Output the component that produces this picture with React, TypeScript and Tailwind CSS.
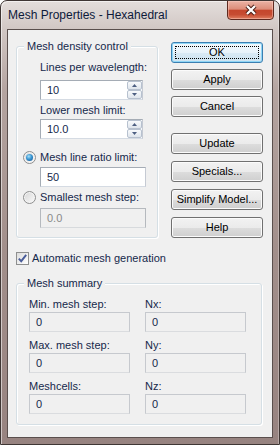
import React from "react";

const LBL = "h-[13px] leading-[13px] text-[11px] text-[#15284b] whitespace-nowrap";

function Btn({ children, def, className = "" }: { children: React.ReactNode; def?: boolean; className?: string }) {
  if (def) {
    return (
      <div
        className={`relative flex h-[21px] w-[92px] items-center justify-center rounded-[3px] border border-[#3c7fb1] bg-[linear-gradient(to_bottom,#f3f9fd_0%,#e7f2fa_50%,#d9eaf5_51%,#cde3f1_100%)] text-[11px] leading-[13px] text-black shadow-[inset_0_0_0_1px_#8fd6f6] ${className}`}
      >
        <div className="absolute inset-[3px] border border-dotted border-black" />
        <span className="relative">{children}</span>
      </div>
    );
  }
  return (
    <div
      className={`flex h-[21px] w-[92px] items-center justify-center rounded-[3px] border border-[#707070] bg-[linear-gradient(to_bottom,#f2f2f2_0%,#ebebeb_50%,#dddddd_51%,#cfcfcf_100%)] text-[11px] leading-[13px] text-black shadow-[inset_0_0_0_1px_#fbfbfb] ${className}`}
    >
      {children}
    </div>
  );
}

function Spin({ value, className = "" }: { value: string; className?: string }) {
  return (
    <div
      className={`flex h-[20px] w-[103px] border border-[#a5acb5] border-b-[#d5dbe3] border-r-[#c5cad3] bg-white ${className}`}
    >
      <div className="flex flex-1 items-center pl-[6px] text-[11px] leading-[13px] text-[#15284b]">{value}</div>
      <div className="flex w-[15px] flex-col gap-0 py-[0px] pr-[0px]">
        <div className="flex flex-1 items-center justify-center rounded-[2px] border border-[#b7c1cf] bg-[linear-gradient(to_bottom,#f8fafc,#dfe5ec)]">
          <svg width="5" height="3" viewBox="0 0 5 3">
            <path d="M0 3 L2.5 0 L5 3 Z" fill="#4d5f82" />
          </svg>
        </div>
        <div className="flex flex-1 items-center justify-center rounded-[2px] border border-[#b7c1cf] bg-[linear-gradient(to_bottom,#f8fafc,#dfe5ec)]">
          <svg width="5" height="3" viewBox="0 0 5 3">
            <path d="M0 0 L2.5 3 L5 0 Z" fill="#4d5f82" />
          </svg>
        </div>
      </div>
    </div>
  );
}

function Field({
  value,
  w,
  variant,
  className = "",
}: {
  value: string;
  w: string;
  variant: "white" | "disabled" | "readonly";
  className?: string;
}) {
  const v =
    variant === "white"
      ? "bg-white border-[#a5acb5] border-b-[#d5dbe3] border-r-[#c5cad3] text-[#15284b]"
      : variant === "disabled"
      ? "bg-[#f0f0f0] border-[#b5b9be] border-b-[#d7dadd] text-[#8a8a8a]"
      : "bg-[#f0f0f0] border-[#c6c9ce] border-b-[#dadcdf] text-[#15284b]";
  return (
    <div className={`flex h-[20px] ${w} items-center border pl-[6px] text-[11px] leading-[13px] ${v} ${className}`}>
      {value}
    </div>
  );
}

function Radio({ checked }: { checked?: boolean }) {
  return (
    <div className="flex h-[13px] w-[13px] shrink-0 items-center justify-center rounded-full border border-[#8e8f8f] bg-[linear-gradient(135deg,#d6d6d6,#fbfbfb)] shadow-[inset_0_0_0_1px_#f4f4f4]">
      {checked && (
        <div className="h-[7px] w-[7px] rounded-full bg-[radial-gradient(circle_at_40%_35%,#a6e0f8_0%,#3a96d2_45%,#0f4f8e_100%)]" />
      )}
    </div>
  );
}

function Check() {
  return (
    <div className="flex h-[13px] w-[13px] shrink-0 items-center justify-center border border-[#8e8f8f] bg-[linear-gradient(135deg,#dcdcdc,#ffffff)]">
      <svg width="11" height="11" viewBox="0 0 11 11">
        <path d="M1.8 5.6 L4.2 8.2 L9.2 1.8" fill="none" stroke="#4a5d9a" strokeWidth="1.9" />
      </svg>
    </div>
  );
}

function Group({ title, className = "", children }: { title: string; className?: string; children: React.ReactNode }) {
  return (
    <div
      className={`relative rounded-[3px] border border-[#d5dfe5] shadow-[inset_1px_1px_0_#ffffff,1px_1px_0_#ffffff] ${className}`}
    >
      <span className="absolute -top-[7px] left-[7px] bg-[#f0f0f0] px-[3px] text-[11px] leading-[13px] text-[#15284b]">
        {title}
      </span>
      {children}
    </div>
  );
}

function Cell({ label, className = "" }: { label: string; className?: string }) {
  return (
    <div className={`flex flex-col ${className}`}>
      <div className={LBL}>{label}</div>
      <Field value="0" w="w-[101px]" variant="readonly" className="mt-[1px]" />
    </div>
  );
}

export default function App() {
  return (
    <div className="relative flex h-[445px] w-[280px] flex-col overflow-hidden rounded-t-[7px] border border-[#3f3634] bg-[linear-gradient(to_bottom,#e4dedc_0px,#d2c8c5_27px,#b4a4a0_90px,#a28f8b_250px,#978380_100%)] font-['Liberation_Sans',Arial,sans-serif] shadow-[inset_1px_1px_0_rgba(255,255,255,0.55),inset_-1px_0_0_rgba(255,255,255,0.3)]">
      <div className="h-[28px] shrink-0 pl-[7px] pt-[7px] text-[12px] leading-[15px] text-[#0d1a3a]">
        Mesh Properties - Hexahedral
      </div>

      <div className="absolute -top-[1px] left-[226px] flex h-[20px] w-[47px] items-center justify-center rounded-b-[4px] border border-[#5e2a20] bg-[linear-gradient(to_bottom,#ebb3a5_0%,#dd8d79_45%,#c5462c_52%,#c64c32_75%,#df7d5f_100%)] shadow-[inset_0_0_0_1px_rgba(255,210,200,0.45)]">
        <svg width="14" height="12" viewBox="0 0 14 12">
          <path d="M3 2 L11 10 M11 2 L3 10" stroke="#4a1d14" strokeWidth="4.2" strokeLinecap="butt" />
          <path d="M3 2 L11 10 M11 2 L3 10" stroke="#ffffff" strokeWidth="2.3" strokeLinecap="butt" />
        </svg>
      </div>

      <div className="mx-[6px] h-[409px] shrink-0 border border-[#5a4f4d] bg-[#f0f0f0]">
        <div className="flex items-start">
          <Group title="Mesh density control" className="ml-[8px] mt-[16px] w-[142px] pb-[9px] pl-[6px] pt-[14px]">
            <div className={`ml-[17px] ${LBL}`}>Lines per wavelength:</div>
            <Spin value="10" className="ml-[17px] mt-[6px]" />
            <div className={`ml-[17px] mt-[4px] ${LBL}`}>Lower mesh limit:</div>
            <Spin value="10.0" className="ml-[17px] mt-[2px]" />
            <div className="mt-[12px] flex h-[13px] items-center">
              <Radio checked />
              <span className={`ml-[4px] ${LBL}`}>Mesh line ratio limit:</span>
            </div>
            <Field value="50" w="w-[106px]" variant="white" className="ml-[17px] mt-[3px]" />
            <div className="mt-[4px] flex h-[13px] items-center">
              <Radio />
              <span className={`ml-[4px] ${LBL}`}>Smallest mesh step:</span>
            </div>
            <Field value="0.0" w="w-[106px]" variant="disabled" className="ml-[17px] mt-[4px]" />
          </Group>

          <div className="ml-[13px] mt-[12px] flex w-[92px] flex-col">
            <Btn def>OK</Btn>
            <Btn className="mt-[6px]">Apply</Btn>
            <Btn className="mt-[6px]">Cancel</Btn>
            <Btn className="mt-[16px]">Update</Btn>
            <Btn className="mt-[7px]">Specials...</Btn>
            <Btn className="mt-[7px]">Simplify Model...</Btn>
            <Btn className="mt-[7px]">Help</Btn>
          </div>
        </div>

        <div className="ml-[8px] mt-[14px] flex h-[13px] items-center">
          <Check />
          <span className={`ml-[3px] ${LBL}`}>Automatic mesh generation</span>
        </div>

        <Group title="Mesh summary" className="ml-[8px] mt-[18px] w-[246px] pb-[10px] pl-[12px] pt-[14px]">
          <div className="grid grid-cols-[101px_101px] gap-x-[15px] gap-y-[7px]">
            <Cell label="Min. mesh step:" />
            <Cell label="Nx:" />
            <Cell label="Max. mesh step:" />
            <Cell label="Ny:" />
            <Cell label="Meshcells:" />
            <Cell label="Nz:" />
          </div>
        </Group>
      </div>
    </div>
  );
}
